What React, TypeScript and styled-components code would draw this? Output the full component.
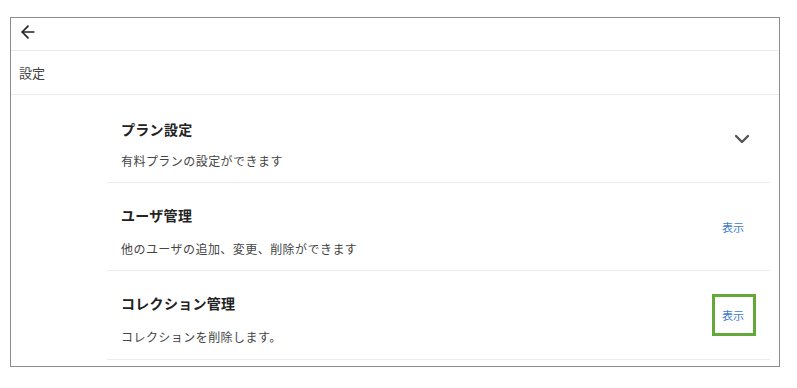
import { FunctionComponent } from "react";
import styled, { createGlobalStyle } from "styled-components";
import { ArrowLeft, ChevronDown } from "lucide-react";

const GlobalStyle = createGlobalStyle`
  html, body {
    margin: 0;
    padding: 0;
    background: #ffffff;
    font-family: "Noto Sans CJK JP", "Noto Sans", sans-serif;
    color: #222;
  }
`;

type SettingItemProps = {
  title: string;
  description: string;
  action: "expand" | "show";
  highlighted?: boolean;
};

const SettingItem: FunctionComponent<SettingItemProps> = ({
  title,
  description,
  action,
  highlighted,
}) => {
  return (
    <Item>
      <ItemText>
        <ItemTitle>{title}</ItemTitle>
        <ItemDescription>{description}</ItemDescription>
      </ItemText>
      {action === "expand" ? (
        <ExpandButton aria-label="expand">
          <ChevronDown size={24} strokeWidth={2.4} />
        </ExpandButton>
      ) : (
        <ShowButton $highlighted={highlighted}>表示</ShowButton>
      )}
    </Item>
  );
};

export default function App() {
  return (
    <>
      <GlobalStyle />
      <Frame>
        <Toolbar>
          <BackButton aria-label="back">
            <ArrowLeft size={20} strokeWidth={2} />
          </BackButton>
        </Toolbar>
        <PageTitle>設定</PageTitle>
        <List>
          <SettingItem
            title="プラン設定"
            description="有料プランの設定ができます"
            action="expand"
          />
          <SettingItem
            title="ユーザ管理"
            description="他のユーザの追加、変更、削除ができます"
            action="show"
          />
          <SettingItem
            title="コレクション管理"
            description="コレクションを削除します。"
            action="show"
            highlighted
          />
        </List>
      </Frame>
    </>
  );
}

const Frame = styled.div`
  box-sizing: border-box;
  margin: 17px 0 0 10px;
  width: 770px;
  height: 350px;
  border: 1px solid #8c8c8c;
  background: #fff;
  overflow: hidden;
`;

const Toolbar = styled.div`
  display: flex;
  align-items: center;
  height: 33px;
  padding: 0 0 4px 7px;
  box-sizing: border-box;
  border-bottom: 1px solid #ececec;
`;

const BackButton = styled.button`
  display: flex;
  align-items: center;
  justify-content: center;
  width: 20px;
  height: 20px;
  padding: 0;
  border: none;
  background: none;
  color: #222;
`;

const PageTitle = styled.div`
  display: flex;
  align-items: center;
  height: 43px;
  padding-left: 8px;
  font-size: 13px;
  color: #444;
  border-bottom: 1px solid #ececec;
`;

const List = styled.div`
  display: flex;
  flex-direction: column;
  padding: 0 9px 0 96px;
`;

const ItemText = styled.div`
  display: flex;
  flex-direction: column;
  gap: 15px;
  padding: 22px 0 0 14px;
`;

const Item = styled.div`
  display: flex;
  align-items: flex-start;
  justify-content: space-between;
  height: 88px;
  box-sizing: border-box;
  border-bottom: 1px solid #ececec;

  &:first-child ${ItemText} {
    gap: 13px;
    padding-top: 24px;
  }

  &:last-child {
    height: 89px;
  }
`;

const ItemTitle = styled.span`
  display: block;
  font-size: 14px;
  line-height: 20px;
  font-weight: 700;
  letter-spacing: 0.3px;
  color: #222;
`;

const ItemDescription = styled.span`
  display: block;
  font-size: 12px;
  line-height: 18px;
  letter-spacing: 0.45px;
  color: #444;
`;

const ExpandButton = styled.button`
  align-self: center;
  display: flex;
  align-items: center;
  justify-content: center;
  width: 24px;
  height: 24px;
  margin-right: 16px;
  padding: 0;
  border: none;
  background: none;
  color: #555;
`;

const ShowButton = styled.button<{ $highlighted?: boolean }>`
  align-self: center;
  box-sizing: border-box;
  width: 44px;
  height: 42px;
  margin-right: 14px;
  padding: 0 2px 0 0;
  border: 3px solid ${({ $highlighted }) => ($highlighted ? "#64a83a" : "transparent")};
  background: none;
  font-family: "Noto Sans CJK JP", sans-serif;
  font-size: 11px;
  color: #3d7bd0;
`;
